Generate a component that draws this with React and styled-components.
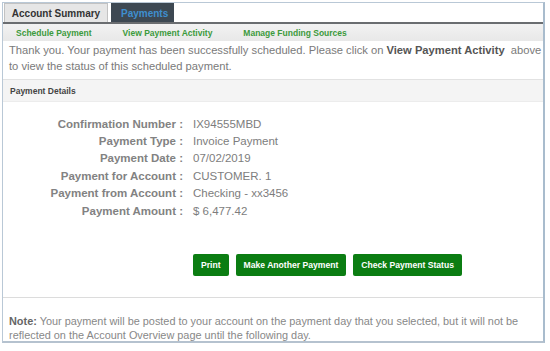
import styled, { createGlobalStyle } from "styled-components";

const Global = createGlobalStyle`
  body {
    margin: 0;
    background: #ffffff;
    font-family: "Liberation Sans", Arial, sans-serif;
  }
`;

const details = [
  ["Confirmation Number :", "IX94555MBD"],
  ["Payment Type :", "Invoice Payment"],
  ["Payment Date :", "07/02/2019"],
  ["Payment for Account :", "CUSTOMER. 1"],
  ["Payment from Account :", "Checking - xx3456"],
  ["Payment Amount :", "$ 6,477.42"],
];

const App = () => {
  return (
    <>
      <Global />
      <Frame>
        <Tabs>
          <Tab>Account Summary</Tab>
          <Tab active>Payments</Tab>
        </Tabs>
        <SubNav>
          <SubLink>Schedule Payment</SubLink>
          <SubLink>View Payment Activity</SubLink>
          <SubLink>Manage Funding Sources</SubLink>
        </SubNav>
        <Message>
          Thank you. Your payment has been successfully scheduled. Please click
          on <b>View Payment Activity</b>&nbsp; above
          <br />
          to view the status of this scheduled payment.
        </Message>
        <SectionHeader>Payment Details</SectionHeader>
        <DetailGrid>
          {details.map(([label, value]) => (
            <Row key={label}>
              <Label>{label}</Label>
              <Value>{value}</Value>
            </Row>
          ))}
        </DetailGrid>
        <Buttons>
          <Button>Print</Button>
          <Button>Make Another Payment</Button>
          <Button>Check Payment Status</Button>
        </Buttons>
        <Note>
          <b>Note:</b> Your payment will be posted to your account on the
          payment day that you selected, but it will not be
          <br />
          reflected on the Account Overview page until the following day.
        </Note>
      </Frame>
    </>
  );
};

const Frame = styled.div`
  margin: 2px 3px 0 2px;
  width: 543px;
  height: 341px;
  box-sizing: border-box;
  border: 1px solid #b9c8d6;
  border-right: 2px solid #a9bccd;
  border-bottom: 2px solid #b5c2cf;
  display: flex;
  flex-direction: column;
`;

const Tabs = styled.div`
  display: flex;
  flex-shrink: 0;
  gap: 3px;
  padding: 0 0 0 1px;
  height: 19px;
  border-bottom: 2px solid #6a6d70;
`;

const Tab = styled.div`
  width: ${(p) => (p.active ? "63px" : "104px")};
  display: flex;
  align-items: center;
  justify-content: ${(p) => (p.active ? "flex-start" : "center")};
  padding-left: ${(p) => (p.active ? "9px" : "0")};
  box-sizing: border-box;
  font-size: 10px;
  font-weight: bold;
  color: ${(p) => (p.active ? "#3f8fcf" : "#333")};
  background: ${(p) => (p.active ? "#3d4852" : "#e6e6e6")};
  border: 1px solid ${(p) => (p.active ? "#3d4852" : "#c2c2c2")};
  border-bottom: none;
`;

const SubNav = styled.div`
  display: flex;
  flex-shrink: 0;
  gap: 31px;
  height: 17px;
  align-items: center;
  padding-left: 13px;
  background: linear-gradient(#f2f2f2, #e8e8e8);
`;

const SubLink = styled.a`
  font-size: 8.5px;
  font-weight: bold;
  color: #3c9a3c;
`;

const Message = styled.p`
  margin: 0;
  flex-shrink: 0;
  padding: 1px 0 0 6px;
  height: 37px;
  font-size: 11.2px;
  line-height: 16px;
  color: #7a7a7a;
  white-space: nowrap;
  b {
    color: #555;
  }
`;

const SectionHeader = styled.div`
  height: 21px;
  flex-shrink: 0;
  display: flex;
  align-items: center;
  padding-left: 7px;
  font-size: 8.5px;
  font-weight: bold;
  color: #444;
  background: #f4f4f4;
  border-top: 1px solid #e2e2e2;
  border-bottom: 1px solid #ececec;
`;

const DetailGrid = styled.div`
  display: flex;
  flex-direction: column;
  padding-top: 13px;
`;

const Row = styled.div`
  display: grid;
  grid-template-columns: 180px 1fr;
  column-gap: 10px;
  height: 17.4px;
  align-items: center;
`;

const Label = styled.span`
  text-align: right;
  font-size: 11.5px;
  font-weight: bold;
  color: #828282;
`;

const Value = styled.span`
  font-size: 11.5px;
  color: #7d7d7d;
`;

const Buttons = styled.div`
  display: flex;
  gap: 7px;
  padding: 35px 0 0 190px;
  height: 22px;
`;

const Button = styled.button`
  height: 22px;
  padding: 0 8px;
  border: none;
  border-radius: 2px;
  background: #0b7d12;
  color: #ffffff;
  font-family: "Liberation Sans", Arial, sans-serif;
  font-size: 8.6px;
  font-weight: bold;
`;

const Note = styled.p`
  margin: 21px 0 0 0;
  border-top: 1px solid #dcdcdc;
  padding: 16px 0 0 6px;
  font-size: 10.9px;
  line-height: 14px;
  color: #888;
  white-space: nowrap;
  b {
    color: #666;
  }
`;

export default App;
